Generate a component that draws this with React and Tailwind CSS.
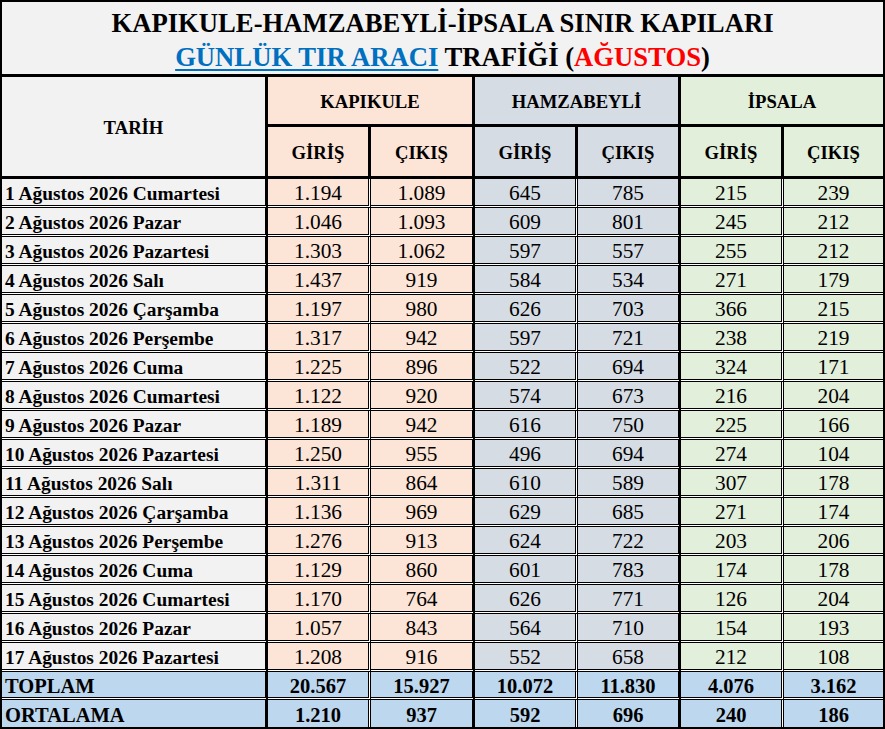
const rows = [
  ['1 Ağustos 2026 Cumartesi', '1.194', '1.089', '645', '785', '215', '239'],
  ['2 Ağustos 2026 Pazar', '1.046', '1.093', '609', '801', '245', '212'],
  ['3 Ağustos 2026 Pazartesi', '1.303', '1.062', '597', '557', '255', '212'],
  ['4 Ağustos 2026 Salı', '1.437', '919', '584', '534', '271', '179'],
  ['5 Ağustos 2026 Çarşamba', '1.197', '980', '626', '703', '366', '215'],
  ['6 Ağustos 2026 Perşembe', '1.317', '942', '597', '721', '238', '219'],
  ['7 Ağustos 2026 Cuma', '1.225', '896', '522', '694', '324', '171'],
  ['8 Ağustos 2026 Cumartesi', '1.122', '920', '574', '673', '216', '204'],
  ['9 Ağustos 2026 Pazar', '1.189', '942', '616', '750', '225', '166'],
  ['10 Ağustos 2026 Pazartesi', '1.250', '955', '496', '694', '274', '104'],
  ['11 Ağustos 2026 Salı', '1.311', '864', '610', '589', '307', '178'],
  ['12 Ağustos 2026 Çarşamba', '1.136', '969', '629', '685', '271', '174'],
  ['13 Ağustos 2026 Perşembe', '1.276', '913', '624', '722', '203', '206'],
  ['14 Ağustos 2026 Cuma', '1.129', '860', '601', '783', '174', '178'],
  ['15 Ağustos 2026 Cumartesi', '1.170', '764', '626', '771', '126', '204'],
  ['16 Ağustos 2026 Pazar', '1.057', '843', '564', '710', '154', '193'],
  ['17 Ağustos 2026 Pazartesi', '1.208', '916', '552', '658', '212', '108'],
]

const totals = [
  ['TOPLAM', '20.567', '15.927', '10.072', '11.830', '4.076', '3.162'],
  ['ORTALAMA', '1.210', '937', '592', '696', '240', '186'],
]

// per number column: background + right border
const colBg = [
  'bg-[#fce4d6]',
  'bg-[#fce4d6]',
  'bg-[#d6dce4]',
  'bg-[#d6dce4]',
  'bg-[#e2efda]',
  'bg-[#e2efda]',
]
const colRight = [
  'border-r-[3px]',
  'border-r-[3px] [border-right-style:solid]',
  'border-r-[3px]',
  'border-r-[3px] [border-right-style:solid]',
  'border-r-[3px]',
  '',
]

const cell = 'flex items-center bg-clip-padding border-black'

function HeadCell({ className, children }) {
  return (
    <div className={`${cell} justify-center pt-[3px] border-solid font-bold text-[18.67px] leading-none ${className}`}>
      {children}
    </div>
  )
}

function DataRow({ r, last, total }) {
  const bottom = last ? '' : 'border-b-[3px]'
  const labelBg = total ? 'bg-[#bdd7ee]' : 'bg-[#f2f2f2]'
  return (
    <>
      <div
        className={`${cell} pt-[3px] border-double ${bottom} border-r-[3px] [border-right-style:solid] ${labelBg} pl-[3px] font-bold leading-none whitespace-nowrap ${total ? 'text-[20.5px]' : 'text-[19.4px]'}`}
      >
        {r[0]}
      </div>
      {r.slice(1).map((v, i) => (
        <div
          key={i}
          className={`${cell} pt-[3px] justify-center border-double ${bottom} ${colRight[i]} ${total ? 'bg-[#bdd7ee] font-bold text-[20.5px]' : `${colBg[i]} text-[21.33px]`} leading-none`}
        >
          {v}
        </div>
      ))}
    </>
  )
}

export default function App() {
  return (
    <div className="w-[885px] h-[729px] bg-white border-2 border-black text-black font-['Liberation_Serif','Times_New_Roman',serif]">
      <div className="h-[75px] pt-[3px] border-b-[3px] border-black bg-[#f2f2f2] flex flex-col items-center justify-center font-bold text-[26.67px] leading-[34px]">
        <div>KAPIKULE-HAMZABEYLİ-İPSALA SINIR KAPILARI</div>
        <div>
          <span className="text-[#0070c0] underline decoration-2 underline-offset-[3px]">GÜNLÜK TIR ARACI</span>{' '}
          TRAFİĞİ (<span className="text-[#ff0000]">AĞUSTOS</span>)
        </div>
      </div>

      <div className="grid grid-cols-[266px_103px_104px_103px_103px_103px_99px] grid-rows-[50px_52px_repeat(17,29px)_28px_27px]">
        <HeadCell className="row-span-2 border-r-[3px] border-b-[3px] bg-[#f2f2f2]">TARİH</HeadCell>
        <HeadCell className="col-span-2 border-r-[3px] border-b-[3px] bg-[#fce4d6]">KAPIKULE</HeadCell>
        <HeadCell className="col-span-2 border-r-[3px] border-b-[3px] bg-[#d6dce4]">HAMZABEYLİ</HeadCell>
        <HeadCell className="col-span-2 border-b-[3px] bg-[#e2efda]">İPSALA</HeadCell>

        <HeadCell className="border-r-[3px] border-b-[3px] bg-[#fce4d6]">GİRİŞ</HeadCell>
        <HeadCell className="border-r-[3px] border-b-[3px] bg-[#fce4d6]">ÇIKIŞ</HeadCell>
        <HeadCell className="border-r-[3px] border-b-[3px] bg-[#d6dce4]">GİRİŞ</HeadCell>
        <HeadCell className="border-r-[3px] border-b-[3px] bg-[#d6dce4]">ÇIKIŞ</HeadCell>
        <HeadCell className="border-r-[3px] border-b-[3px] bg-[#e2efda]">GİRİŞ</HeadCell>
        <HeadCell className="border-b-[3px] bg-[#e2efda]">ÇIKIŞ</HeadCell>

        {rows.map((r) => (
          <DataRow key={r[0]} r={r} />
        ))}
        {totals.map((r, i) => (
          <DataRow key={r[0]} r={r} total last={i === 1} />
        ))}
      </div>
    </div>
  )
}
